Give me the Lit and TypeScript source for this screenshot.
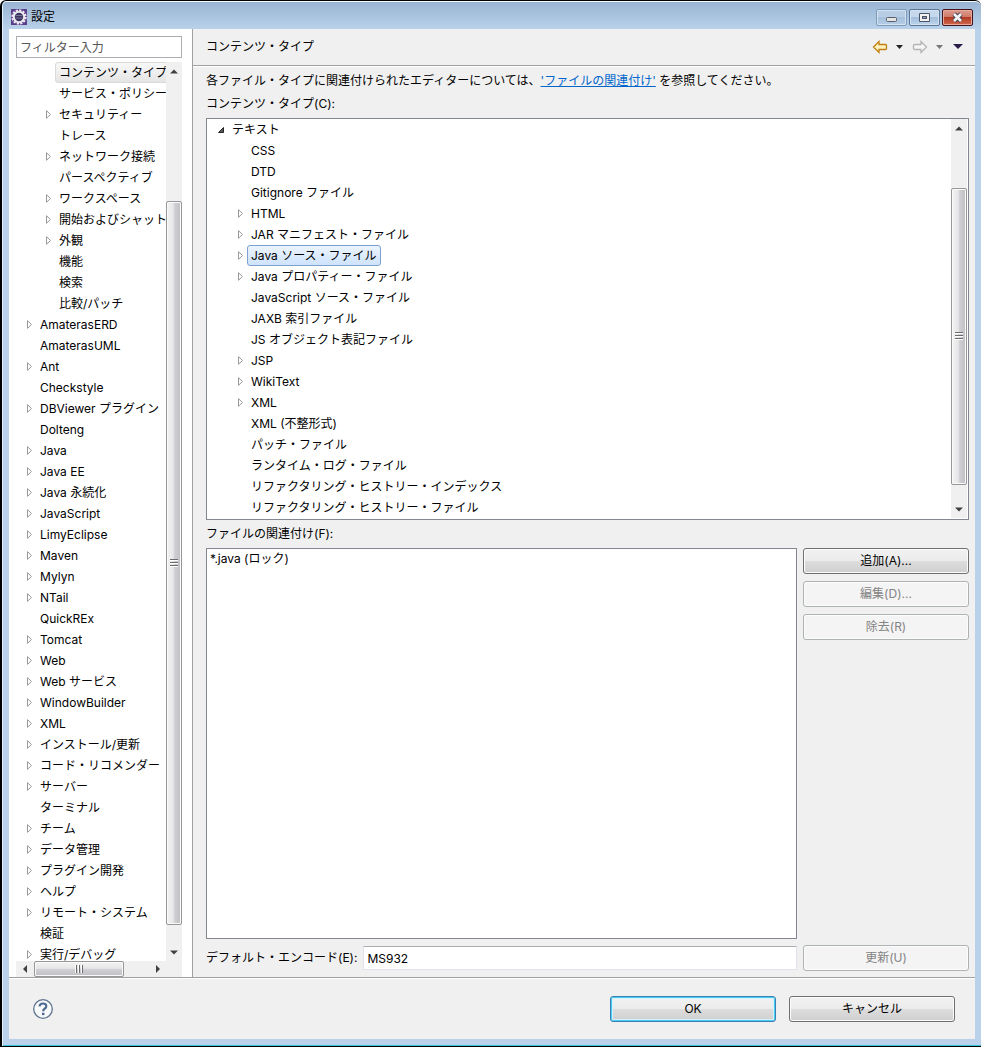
import { LitElement, html, svg, css, nothing } from "lit";
import { customElement, property } from "lit/decorators.js";
import { classMap } from "lit/directives/class-map.js";

interface Row {
  label: string;
  level: number;
  state?: "closed" | "open";
  selected?: boolean;
}

const parse = (level: number, text: string): Row[] =>
  text.split("|").map((entry) => ({
    label: entry.replace(/^[+*-]+/, ""),
    level,
    state: entry.startsWith("+") ? "closed" : entry.startsWith("-") ? "open" : undefined,
    selected: /^\+?\*/.test(entry),
  }));

const PAGES: Row[] = [
  ...parse(2, "*コンテンツ・タイプ|サービス・ポリシー|+セキュリティー|トレース|+ネットワーク接続|パースペクティブ|+ワークスペース|+開始およびシャット|+外観|機能|検索|比較/パッチ"),
  ...parse(1, "+AmaterasERD|AmaterasUML|+Ant|Checkstyle|+DBViewer プラグイン|Dolteng|+Java|+Java EE|+Java 永続化|+JavaScript|+LimyEclipse|+Maven|+Mylyn|+NTail|QuickREx|+Tomcat|+Web|+Web サービス|+WindowBuilder|+XML|+インストール/更新|+コード・リコメンダー|+サーバー|ターミナル|+チーム|+データ管理|+プラグイン開発|+ヘルプ|+リモート・システム|検証|+実行/デバッグ"),
];

const TYPES: Row[] = [
  ...parse(1, "-テキスト"),
  ...parse(2, "CSS|DTD|Gitignore ファイル|+HTML|+JAR マニフェスト・ファイル|+*Java ソース・ファイル|+Java プロパティー・ファイル|JavaScript ソース・ファイル|JAXB 索引ファイル|JS オブジェクト表記ファイル|+JSP|+WikiText|+XML|XML (不整形式)|パッチ・ファイル|ランタイム・ログ・ファイル|リファクタリング・ヒストリー・インデックス|リファクタリング・ヒストリー・ファイル"),
];

@customElement("pref-tree")
class PrefTree extends LitElement {
  @property({ attribute: false }) rows: Row[] = [];
  @property({ type: Boolean, reflect: true }) active = false;

  static styles = css`
    :host { display: block; min-width: 0; overflow: hidden; }
    .list { margin: 0; padding: 0; list-style: none; }
    .row { display: flex; align-items: center; height: 21px; white-space: nowrap; }
    .level2 { padding-left: 19px; }
    .twisty { flex: none; width: 9px; height: 9px; margin-right: 2px; }
    .label { padding: 0 3px; line-height: 19px; border: 1px solid transparent; border-radius: 3px; }
    .selected { border-color: #d9d9d9; background: linear-gradient(#f8f8f8, #e5e5e5); }
    :host([active]) .selected { border-color: #7da2ce; background: linear-gradient(#ebf4fd, #cfe3fd); }
  `;

  render() {
    return html`<ul class="list" role="tree">
      ${this.rows.map((r) => html`
        <li role="treeitem" class=${classMap({ row: true, level2: r.level === 2 })}>
          <svg class="twisty" viewBox="0 0 9 9">
            ${r.state === "closed" ? svg`<path d="M2.5 0.7V8.3L6.5 4.5Z" fill="#fff" stroke="#9a9a9a"/>` : nothing}
            ${r.state === "open" ? svg`<path d="M6.5 2.500V7.500H1.500Z" fill="#595959" stroke="#262626"/>` : nothing}
          </svg>
          <span class=${classMap({ label: true, selected: !!r.selected })}>${r.label}</span>
        </li>`)}
    </ul>`;
  }
}

@customElement("scroll-bar")
class ScrollBar extends LitElement {
  @property({ type: Boolean, reflect: true }) horizontal = false;
  @property({ type: Number }) before = 0;
  @property({ type: Number }) thumb = 1;
  @property({ type: Number }) after = 0;

  static styles = css`
    :host { display: flex; flex-direction: column; flex: none; width: 16px; background: #f0f0f0; }
    :host([horizontal]) { flex-direction: row; width: auto; height: 16px; }
    .arrow { flex: none; width: 16px; height: 17px; }
    :host([horizontal]) .arrow { width: 18px; height: 16px; }
    .gap { min-height: 0; min-width: 0; }
    .thumb { display: flex; align-items: center; justify-content: center; box-sizing: border-box; min-height: 0;
      border: 1px solid #979797; border-radius: 2px; box-shadow: inset 0 0 0 1px #fafafa;
      background: linear-gradient(90deg, #f3f3f3, #e6e6e8 45%, #cfcfd3 55%, #c0c0c4); }
    :host([horizontal]) .thumb { background: linear-gradient(#f3f3f3, #e6e6e8 45%, #cfcfd3 55%, #c0c0c4); }
    .grip { width: 8px; height: 8px; }
    :host([horizontal]) .grip { transform: rotate(90deg); }
  `;

  private arrow(back: boolean) {
    const d = this.horizontal
      ? back ? "M10 4V12L6 8Z" : "M7 4V12L11 8Z"
      : back ? "M4 11H12L8 7Z" : "M4 6H12L8 10Z";
    return html`<svg class="arrow" viewBox="0 0 16 16"><path d=${d} fill="#404040"/></svg>`;
  }

  render() {
    return html`
      ${this.arrow(true)}
      <div class="gap" style="flex:${this.before} 1 0"></div>
      <div class="thumb" style="flex:${this.thumb} 1 0">
        <svg class="grip" viewBox="0 0 8 8"><path d="M0 0.5H8M0 3.5H8M0 6.5H8" stroke="#6b6b6b"/><path d="M0 1.5H8M0 4.5H8M0 7.5H8" stroke="#fff"/></svg>
      </div>
      <div class="gap" style="flex:${this.after} 1 0"></div>
      ${this.arrow(false)}`;
  }
}

@customElement("app-root")
class AppRoot extends LitElement {
  static styles = css`
    :host { display: block; font: 12px/20px Inter, "Noto Sans CJK JP", sans-serif; color: #000; }
    .window { display: flex; flex-direction: column; box-sizing: border-box; height: 100vh; min-height: 640px;
      padding: 0 6px 7px 7px; border: solid #000; border-width: 1px 0 1px 2px; border-radius: 6px 6px 0 0;
      box-shadow: inset 1px 0 #dff3fb, inset 0 1px #f5fafd, inset 0 -1px #35c4dc;
      background: linear-gradient(#97b4d2, #b9d1ea 28px); }
    .titlebar { display: flex; align-items: center; flex: none; height: 28px; padding-left: 2px; }
    .logo { width: 16px; height: 16px; margin: 4px 4px 0 0; }
    .title { flex: 1; margin: 0; padding-top: 4px; font: inherit; }
    .captions { display: flex; gap: 2px; padding: 8px 2px 3px 0; }
    .caption { display: grid; place-items: center; box-sizing: border-box; width: 31px; height: 17px; padding: 0;
      border: 1px solid #5b7593; border-radius: 2px; box-shadow: inset 0 0 0 1px #d3e3f3;
      background: linear-gradient(#c5d8ec 50%, #a3bfdb 50%, #bcd3ea); }
    .faint { border-color: #7e9bba; background: linear-gradient(#b9cee5 50%, #a5c0dc 50%, #b5cde6); }
    .close { border-color: #45121a; box-shadow: inset 0 0 0 1px #e5a99d; background: linear-gradient(#dd9a8c, #cf7868 50%, #b43a23 50%, #cf6a50); }
    .glyph { display: block; }
    .body { display: grid; grid-template-columns: 184px 1fr; flex: 1; min-height: 0; background: #f0f0f0; }
    .nav { display: flex; flex-direction: column; min-height: 0; padding: 7px 10px 0 7px; background: #fff; border-right: 1px solid #a0a0a0; }
    .filter { box-sizing: border-box; flex: none; width: 100%; height: 22px; margin: 0 0 4px; padding: 0 3px; border: 1px solid #abadb3;
      background: #fff; font: inherit; color: #000; border-radius: 0; }
    .filter::placeholder { color: #555; opacity: 1; }
    .navtree { display: flex; flex: 1; min-height: 0; }
    .pages { flex: 1; padding-left: 9px; }
    .hscroll { margin-right: 16px; }
    .nav-foot { flex: none; background: #f0f0f0; }
    .page { display: flex; flex-direction: column; min-width: 0; min-height: 0; }
    .header { display: flex; align-items: center; justify-content: space-between; flex: none; height: 36px; padding: 0 11px 0 13px;
      border-bottom: 1px solid #a0a0a0; box-shadow: 0 1px #fff; }
    .heading { margin: 0; font: inherit; }
    .tools { display: flex; align-items: center; }
    .tool { display: block; padding: 0; border: 0; background: none; }
    .drop { margin: 0 8px 0 7px; }
    .content { display: flex; flex-direction: column; flex: 1; min-height: 0; padding: 3px 6px 6px 13px; }
    .text { margin: 0; line-height: 24px; flex: none; }
    .link { color: #0066cc; text-decoration: underline; }
    .label { flex: none; line-height: 22px; margin-bottom: 3px; }
    .types { display: flex; flex: none; padding: 0 1px 1px; border: 1px solid #828790; background: #fff; }
    .typetree { flex: 1; padding-left: 9px; }
    .assoc-label { margin: 3px 0; }
    .assoc { display: grid; grid-template-columns: 1fr 166px; gap: 6px; flex: 1; min-height: 0; }
    .files { margin: 0; padding: 0 3px; list-style: none; border: 1px solid #828790; background: #fff; }
    .side { display: flex; flex-direction: column; gap: 7px; }
    .btn { box-sizing: border-box; flex: none; width: 166px; height: 26px; padding: 0; font: inherit; color: #000;
      border: 1px solid #707070; border-radius: 3px; box-shadow: inset 0 0 0 1px #fcfcfc;
      background: linear-gradient(#f2f2f2, #ebebeb 50%, #dddddd 50%, #cfcfcf); }
    .btn:disabled { border-color: #adb2b5; background: #f4f4f4; color: #838383; }
    .primary { border-color: #3c7fb1; box-shadow: inset 0 0 0 1px #48cef4, inset 0 0 0 2px #d5f1fb; }
    .encoding { display: grid; grid-template-columns: auto 1fr 166px; align-items: center; gap: 6px; flex: none; padding-top: 6px; }
    .enc { box-sizing: border-box; height: 24px; min-width: 0; padding: 0 3px; font: inherit; color: #000; background: #fff;
      border: 1px solid #e2e3ea; border-top-color: #abadb3; border-radius: 0; }
    .footer { display: flex; align-items: center; gap: 13px; flex: none; height: 61px; padding: 0 20px 0 23px; border-top: 1px solid #a0a0a0;
      box-shadow: inset 0 1px #fff; background: #f0f0f0; }
    .help { margin-right: auto; padding: 0; border: 0; background: none; }
  `;

  render() {
    return html`
      <div class="window">
        <header class="titlebar">
          <svg class="logo" viewBox="0 0 16 16">
            <rect width="16" height="16" fill="#5b3f8a"/>
            <circle cx="8" cy="8" r="6.700" fill="none" stroke="#eceaf0" stroke-width="2" stroke-dasharray="2.200 1.308"/>
            <circle cx="8" cy="8" r="5.200" fill="#3b3560" stroke="#eceaf0" stroke-width="2"/>
            <path d="M4.500 6.500H11.500M4.500 9H11.500" stroke="#77749a"/>
          </svg>
          <h1 class="title">設定</h1>
          <div class="captions">
            <button class="caption faint" aria-label="最小化"><svg class="glyph" width="13" height="11"><rect x="1.5" y="5.5" width="10" height="4" rx="1" fill="#e4e4e4" stroke="#555e6a"/></svg></button>
            <button class="caption" aria-label="最大化"><svg class="glyph" width="13" height="11"><path d="M1.5 1.5H11.5V9.5H1.5Z" fill="#f2f2f2" stroke="#4b5565"/><rect x="4.5" y="4.5" width="4" height="2" fill="#8ba3c0" stroke="#4b5565"/></svg></button>
            <button class="caption close" aria-label="閉じる"><svg class="glyph" width="13" height="11"><path d="M3 2L10 9M10 2L3 9" stroke="#4b4655" stroke-width="4.6"/><path d="M3 2L10 9M10 2L3 9" stroke="#f5f5f5" stroke-width="2.6"/></svg></button>
          </div>
        </header>

        <main class="body">
          <nav class="nav">
            <input class="filter" type="text" placeholder="フィルター入力" aria-label="フィルター入力">
            <div class="navtree">
              <pref-tree class="pages" .rows=${PAGES}></pref-tree>
              <scroll-bar .before=${122} .thumb=${723} .after=${19}></scroll-bar>
            </div>
            <div class="nav-foot"><scroll-bar class="hscroll" horizontal .before=${0} .thumb=${89} .after=${24}></scroll-bar></div>
          </nav>

          <section class="page">
            <div class="header">
              <h2 class="heading">コンテンツ・タイプ</h2>
              <div class="tools">
                <button class="tool" aria-label="戻る"><svg class="glyph" width="16" height="16"><path d="M1.5 8L7 2.5V5.5H13.5Q14.5 5.5 14.5 6.5V9.5Q14.5 10.5 13.5 10.5H7V13.5Z" fill="#fdf1c0" stroke="#c07f10" stroke-width="1.3"/></svg></button>
                <svg class="drop" width="9" height="5"><path d="M1 0H8L4.500 4Z" fill="#222"/></svg>
                <button class="tool" aria-label="進む"><svg class="glyph" width="16" height="16"><path d="M14.500 8L9 2.500V5.500H2.500Q1.500 5.500 1.500 6.500V9.500Q1.500 10.500 2.500 10.500H9V13.500Z" fill="#f6f6f6" stroke="#b4b4b4" stroke-width="1.300"/></svg></button>
                <svg class="drop" width="9" height="5"><path d="M1 0H8L4.500 4Z" fill="#777"/></svg>
                <button class="tool" aria-label="メニュー"><svg class="glyph" width="12" height="6"><path d="M1 0H11L6 5Z" fill="#2b1d4a"/></svg></button>
              </div>
            </div>
            <div class="content">
              <p class="text">各ファイル・タイプに関連付けられたエディターについては、<a class="link" href="#">'ファイルの関連付け'</a> を参照してください。</p>
              <div class="label">コンテンツ・タイプ(C):</div>
              <div class="types">
                <pref-tree class="typetree" active .rows=${TYPES}></pref-tree>
                <scroll-bar .before=${52} .thumb=${297} .after=${16}></scroll-bar>
              </div>
              <div class="label assoc-label">ファイルの関連付け(F):</div>
              <div class="assoc">
                <ul class="files"><li>*.java (ロック)</li></ul>
                <div class="side">
                  <button class="btn">追加(A)...</button>
                  <button class="btn" disabled>編集(D)...</button>
                  <button class="btn" disabled>除去(R)</button>
                </div>
              </div>
              <div class="encoding">
                <label for="enc">デフォルト・エンコード(E):</label>
                <input id="enc" class="enc" type="text" value="MS932">
                <button class="btn" disabled>更新(U)</button>
              </div>
            </div>
          </section>
        </main>

        <footer class="footer">
          <button class="help" aria-label="ヘルプ"><svg class="glyph" width="22" height="22" viewBox="0 0 22 22"><circle cx="11" cy="11" r="9.3" fill="#f7f9fb" stroke="#5f7590" stroke-width="1.300"/><path d="M7.500 8.300Q7.800 5.500 11 5.500Q14.300 5.500 14.300 8.200Q14.300 9.700 12.600 10.700Q11.200 11.500 11.200 13.300" fill="none" stroke="#4f6a92" stroke-width="2.200"/><rect x="10" y="14.700" width="2.400" height="2.400" fill="#4f6a92"/></svg></button>
          <button class="btn primary">OK</button>
          <button class="btn">キャンセル</button>
        </footer>
      </div>`;
  }
}
